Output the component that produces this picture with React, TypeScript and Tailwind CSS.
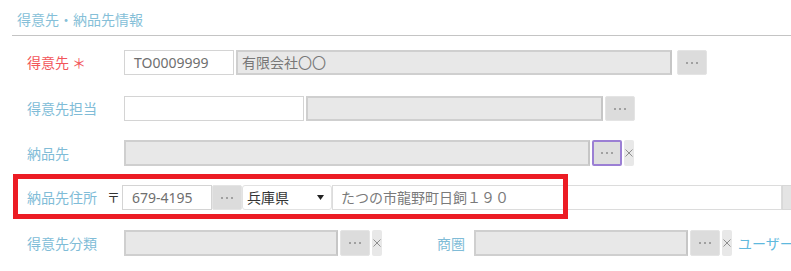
import React from 'react';

const font = {
  fontFamily: '"Noto Sans", "Noto Sans CJK JP", sans-serif',
};

function Dots({ purple = false, w = 'w-[30px]' }: { purple?: boolean; w?: string }) {
  return (
    <button
      type={'button'}
      className={
        purple
          ? `${w} h-full shrink-0 flex items-center justify-center gap-[3px] bg-[#dedede] border-2 border-[#9b7fd4] rounded-[2px]`
          : `${w} h-full shrink-0 flex items-center justify-center gap-[3px] bg-[#dcdcdc] border border-[#e4e4e4] rounded-[2px]`
      }
    >
      <span className="w-[2px] h-[2px] rounded-full bg-[#8c8c8c]" />
      <span className="w-[2px] h-[2px] rounded-full bg-[#8c8c8c]" />
      <span className="w-[2px] h-[2px] rounded-full bg-[#8c8c8c]" />
    </button>
  );
}

function Clear() {
  return (
    <button
      type={'button'}
      className="w-[10px] h-full shrink-0 flex items-center justify-center bg-[#e8e8e8] rounded-[2px]"
    >
      <svg width="8" height="8" viewBox="0 0 8 8">
        <path d="M0.5 0.5 L7.5 7.5 M7.5 0.5 L0.5 7.5" stroke="#8f8f8f" strokeWidth="1" />
      </svg>
    </button>
  );
}

function Grey({ w, text }: { w: string; text?: string }) {
  return (
    <div
      className={`${w} h-full shrink-0 flex items-center px-[4px] bg-[#e8e8e8] border-2 border-[#cfcfcf] border-r-[#c6c6c6] text-[14px] text-[#777]`}
    >
      {text}
    </div>
  );
}

function White({ w, text }: { w: string; text?: string }) {
  return (
    <div
      className={`${w} h-full shrink-0 flex items-center px-[9px] bg-white border border-[#d4d4d4] text-[14px] text-[#6f6f6f]`}
    >
      {text}
    </div>
  );
}

function Label({ children, red = false }: { children: React.ReactNode; red?: boolean }) {
  return (
    <div
      className={`w-[110px] shrink-0 pl-[15px] text-[14px] ${red ? 'text-[#f2555a]' : 'text-[#80bcd7]'}`}
    >
      {children}
    </div>
  );
}

export default function App() {
  return (
    <div className="relative w-[791px] h-[271px] overflow-hidden bg-white" style={font}>
      <div className="ml-[12px]">
        <div className="h-[36px] pl-[5px] pt-[9px] border-b border-[#c4c4c4] text-[14px] text-[#86bfd8]">
          得意先・納品先情報
        </div>

        <div className="mt-[14px] h-[25px] flex items-center gap-[2px]">
          <Label red>
            得意先<span className="ml-[3px]">＊</span>
          </Label>
          <White w="w-[110px]" text="TO0009999" />
          <Grey w="w-[436px]" text="有限会社〇〇" />
          <div className="w-[1px]" />
          <Dots />
        </div>

        <div className="mt-[21px] h-[25px] flex items-center gap-[2px]">
          <Label>得意先担当</Label>
          <White w="w-[180px]" />
          <Grey w="w-[297px]" />
          <Dots />
        </div>

        <div className="mt-[19px] h-[26px] flex items-center gap-[2px]">
          <Label>納品先</Label>
          <Grey w="w-[466px]" />
          <Dots purple />
          <Clear />
        </div>

        <div className="mt-[19px] h-[25px] flex items-center">
          <div className="w-[110px] shrink-0 flex items-center justify-between pl-[15px] pr-[2px] text-[14px]">
            <span className="text-[#80bcd7]">納品先住所</span>
            <span className="text-[#333] text-[13px]">〒</span>
          </div>
          <White w="w-[90px]" text="679-4195" />
          <div className="w-[2px]" />
          <Dots />
          <div className="w-[3px]" />
          <div className="w-[90px] h-full shrink-0 flex items-center justify-between pl-[4px] pr-[7px] bg-white border border-[#e2e2e2] rounded-[3px] text-[14px] text-[#333]">
            <span>兵庫県</span>
            <svg width="7" height="5" viewBox="0 0 7 5">
              <path d="M0 0 L7 0 L3.5 5 Z" fill="#222" />
            </svg>
          </div>
          <div className="w-[1px]" />
          <div className="w-[450px] h-full shrink-0 flex items-center px-[8px] bg-white border border-[#dcdcdc] text-[14px] text-[#7a7a7a]">
            たつの市龍野町日飼１９０
          </div>
          <div className="w-[2px]" />
          <div className="w-[20px] h-full shrink-0 bg-[#e4e4e4] border border-[#d8d8d8]" />
        </div>

        <div className="mt-[20px] h-[26px] flex items-center gap-[2px] whitespace-nowrap">
          <Label>得意先分類</Label>
          <Grey w="w-[214px]" />
          <Dots />
          <Clear />
          <div className="w-[88px] shrink-0 pr-[7px] text-right text-[14px] text-[#80bcd7]">商圏</div>
          <Grey w="w-[214px]" />
          <Dots />
          <Clear />
          <span className="ml-[4px] text-[14px] text-[#5fb9de]">ユーザー</span>
        </div>
      </div>

      <div className="absolute left-[13px] top-[174px] w-[555px] h-[45px] border-[5px] border-[#ec1c24] pointer-events-none" />
    </div>
  );
}
